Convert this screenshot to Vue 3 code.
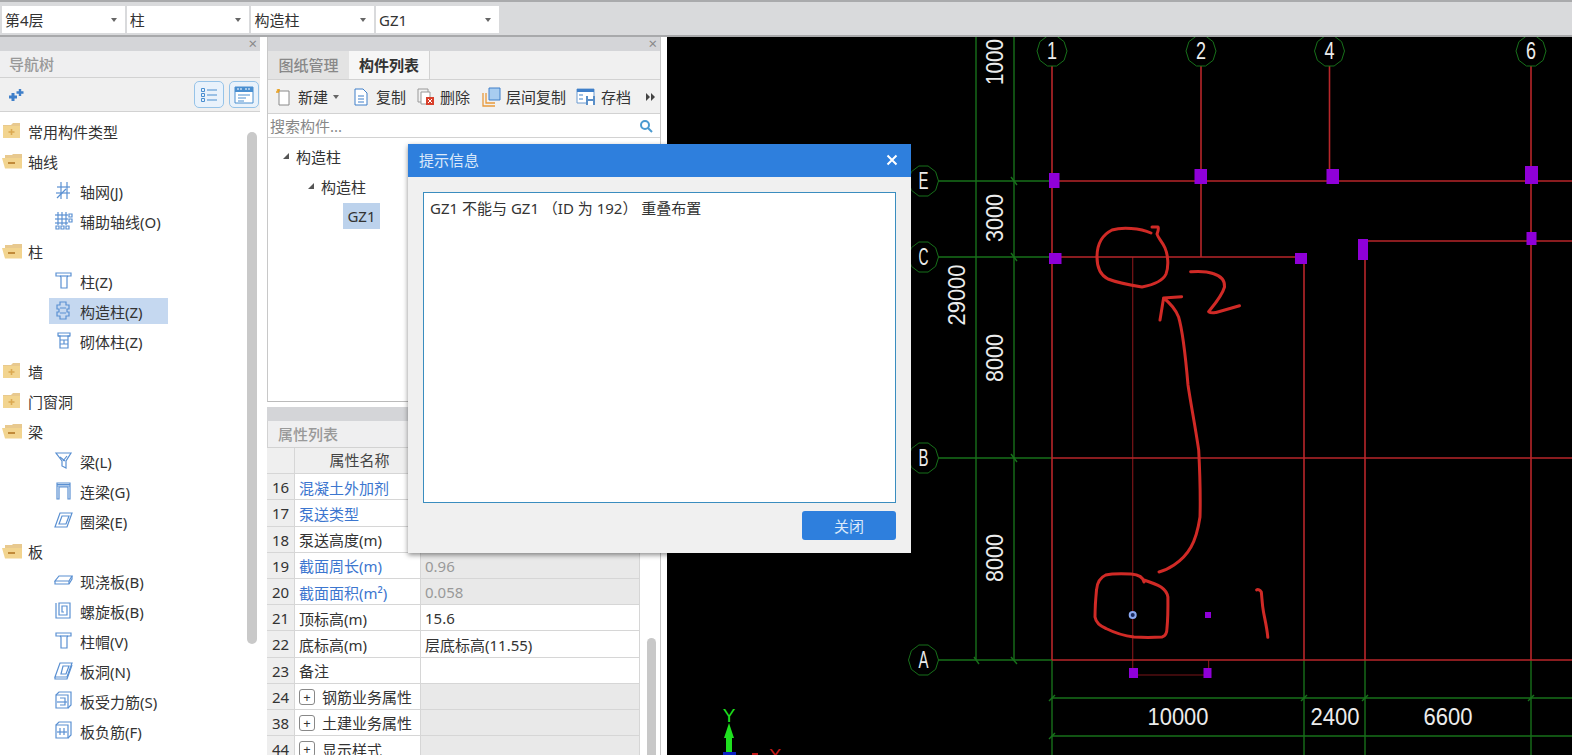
<script setup>
const selects = ['第4层', '柱', '构造柱', 'GZ1']

const treeRows = [
  { label: '常用构件类型', folder: 'closed' },
  { label: '轴线', folder: 'open' },
  { label: '轴网(J)', icon: 'grid' },
  { label: '辅助轴线(O)', icon: 'aux' },
  { label: '柱', folder: 'open' },
  { label: '柱(Z)', icon: 'column' },
  { label: '构造柱(Z)', icon: 'gz', active: true },
  { label: '砌体柱(Z)', icon: 'masonry' },
  { label: '墙', folder: 'closed' },
  { label: '门窗洞', folder: 'closed' },
  { label: '梁', folder: 'open' },
  { label: '梁(L)', icon: 'beam' },
  { label: '连梁(G)', icon: 'link' },
  { label: '圈梁(E)', icon: 'ring' },
  { label: '板', folder: 'open' },
  { label: '现浇板(B)', icon: 'slab' },
  { label: '螺旋板(B)', icon: 'spiral' },
  { label: '柱帽(V)', icon: 'column' },
  { label: '板洞(N)', icon: 'hole' },
  { label: '板受力筋(S)', icon: 'rebarS' },
  { label: '板负筋(F)', icon: 'rebarF' },
]

const icons = {
  grid: ['M3 6H16', 'M2 12H16', 'M7 1V18', 'M13 1V18', 'M3 17L12 8'],
  aux: ['M1 4H14', 'M1 8H14', 'M1 12H14', 'M4 1V14', 'M8 1V14', 'M12 1V14', 'M15 3h3v3h-3z', 'M15 8h3v3h-3z', 'M2 15h3v3H2z', 'M7 15h3v3H7z', 'M12 15h3v3h-3z'],
  column: ['M2 2H17V5H14L13 6V17H7V6L6 5H2Z', 'M6 5H14'],
  gz: ['M6 1H12V4H15V8H13V11H15V15H12V18H6V15H3V11H5V8H3V4H6Z', 'M6 7H12M6 12H12'],
  masonry: ['M4 2H16V5H14V17H6V5H4Z', 'M4 5H16', 'M6 9H14M6 13H14', 'M10 9V13'],
  beam: ['M2 2H17L12 10V17L8 15V10Z', 'M6 6L11 10M13 5L9 10'],
  link: ['M3 2H16V18H14V6H5V18H3Z', 'M3 3.5H16M3 5H16'],
  ring: ['M6 2H18L13 16H1Z', 'M8 5H15L12 13H5Z'],
  slab: ['M5 5H18L15 10H1Z', 'M1 10V13H15L18 8V5', 'M15 10V13'],
  spiral: ['M2 2V17H16V2H5V14H13V5H8V11H10'],
  hole: ['M6 2H18L13 16H1Z', 'M9 5H15L12 13H7Z', 'M1 16V18H13L18 4'],
  rebarS: ['M2 4H14V17H2Z', 'M2 4L5 1H17V14L14 17', 'M3 11H13', 'M6 7H11V14H6'],
  rebarF: ['M2 4H14V17H2Z', 'M2 4L5 1H17V14L14 17', 'M3 11H13', 'M6 7V14M10 7V14'],
}

const propRows = [
  { no: 16, name: '混凝土外加剂', blue: true, value: '' },
  { no: 17, name: '泵送类型', blue: true, value: '' },
  { no: 18, name: '泵送高度(m)', value: '' },
  { no: 19, name: '截面周长(m)', blue: true, value: '0.96', grey: true },
  { no: 20, name: '截面面积(m²)', blue: true, value: '0.058', grey: true },
  { no: 21, name: '顶标高(m)', value: '15.6' },
  { no: 22, name: '底标高(m)', value: '层底标高(11.55)' },
  { no: 23, name: '备注', value: '' },
  { no: 24, name: '钢筋业务属性', value: '', grey: true, group: true },
  { no: 38, name: '土建业务属性', value: '', grey: true, group: true },
  { no: 44, name: '显示样式', value: '', grey: true, group: true },
]

// drawing coordinates are page pixels, the svg viewBox starts at the canvas corner
const greenLines = [
  [976, 37, 976, 660], [1014, 37, 1014, 660],
  [938, 181, 1052, 181], [938, 257, 1052, 257], [938, 458, 1052, 458], [938, 660, 1052, 660],
  [1052, 660, 1052, 755], [1304, 660, 1304, 755], [1365, 660, 1365, 755], [1531, 660, 1531, 755],
  [1052, 698, 1572, 698], [1052, 736, 1572, 736],
]
const ticks = [
  [1011, 177, 1017, 185], [1011, 253, 1017, 261], [1011, 454, 1017, 462],
  [974, 657, 979, 664], [1011, 657, 1017, 664],
  [1049, 701, 1055, 695], [1301, 701, 1307, 695], [1362, 701, 1368, 695], [1528, 701, 1534, 695],
  [1049, 739, 1055, 733],
]
const redLines = [
  [1052, 66, 1052, 660], [1201, 66, 1201, 257], [1329.5, 66, 1329.5, 181], [1531, 66, 1531, 660],
  [1304, 257, 1304, 660], [1365, 241, 1365, 660],
  [1052, 181, 1572, 181], [1052, 257, 1304, 257], [1365, 241, 1572, 241],
  [1052, 458, 1572, 458], [1052, 660, 1572, 660],
]
const darkLines = [
  [1132.7, 257, 1132.7, 670], [1208.6, 660, 1208.6, 670], [1134, 675, 1208, 675],
]
const blocks = [
  [1049, 173, 10.5, 15], [1194.5, 169, 12.5, 15], [1326.5, 169, 12.5, 15], [1525, 166, 13, 18],
  [1049, 253, 12.5, 11], [1295, 253, 12, 11], [1358, 239, 10, 21], [1526.5, 232, 10, 13],
  [1129, 668, 9, 10], [1203.5, 668, 8, 10], [1205, 612, 6, 6],
]

const bubblePoints = (cx, cy, r) => {
  const pts = []
  for (let i = 0; i < 10; i++) {
    const a = (Math.PI * 2 * i) / 10
    pts.push(`${(cx + r * Math.cos(a)).toFixed(1)},${(cy + r * 1.05 * Math.sin(a)).toFixed(1)}`)
  }
  return pts.join(' ')
}
const bubbles = [
  { x: 1052, y: 51, t: '1' }, { x: 1201, y: 51, t: '2' }, { x: 1329.5, y: 51, t: '4' }, { x: 1531, y: 51, t: '6' },
  { x: 923.5, y: 181, t: 'E' }, { x: 923.5, y: 257, t: 'C' }, { x: 923.5, y: 458, t: 'B' }, { x: 923.5, y: 660, t: 'A' },
]
const dimsV = [
  { x: 995, y: 62, t: '1000', w: 46 }, { x: 995, y: 218, t: '3000', w: 48 },
  { x: 995, y: 358, t: '8000', w: 48 }, { x: 995, y: 558, t: '8000', w: 48 },
  { x: 957, y: 295, t: '29000', w: 61 },
]
const dimsH = [
  { x: 1178, y: 717, t: '10000', w: 61 }, { x: 1335, y: 717, t: '2400', w: 49 }, { x: 1448, y: 717, t: '6600', w: 49 },
]
const marks = [
  'M1151 233C1140 228 1122 227 1112 230C1102 235 1097 245 1097 257C1097 268 1100 275 1108 279C1118 283 1130 285 1142 287C1152 285 1163 281 1166 274C1169 266 1168 255 1165 248C1162 241 1158 238 1157 234C1158 231 1159 229 1158 227L1152 227',
  'M1181.6 296.7L1163.6 298L1160 320M1163.6 298C1170 303 1175 308 1178.6 317C1183 332 1185 350 1188 385C1191 405 1195 425 1198.7 450C1200 475 1200.5 500 1200 517C1198 530 1195 540 1191 547C1186 556 1180 561 1174 565C1168 569 1163 571 1159 572',
  'M1190.6 271.7C1200 271 1209 272 1213 273.5C1221 276 1225 281 1224.5 287C1222 296 1214 305 1208.6 311.7C1211 313.5 1213 313 1216 312.5L1239.5 305.7',
  'M1144 582C1143 576 1137 574.5 1131 574C1120 573.5 1110 574 1105.7 575C1099 578 1097 583 1096.5 590C1095.5 600 1095 608 1095 617C1096 623 1100 626 1106 628.5C1115 633 1125 636 1134 637C1143 637.5 1153 637.5 1162 637C1166 636 1167 632 1167 628C1168 618 1168 606 1167.9 597C1167 592 1164 589 1161 587C1156 584 1150 582 1144 580',
  'M1256.6 590C1258 589 1260 590 1261.3 592C1262 598 1262 604 1263.5 612C1265 620 1267 628 1267.8 637.3',
]
</script>

<template>
  <div class="page">
    <div class="top-bar">
      <div v-for="s in selects" :key="s" class="select">
        <span>{{ s }}</span>
        <i class="caret"></i>
      </div>
    </div>

    <div class="main">
      <aside class="nav-panel">
        <div class="strip"><span class="strip-x">×</span></div>
        <div class="panel-title">导航树</div>
        <div class="nav-tools">
          <svg class="spark" width="17" height="14" viewBox="0 0 17 14">
            <path d="M5 5V13M1 9H9" stroke="#3f7fc9" stroke-width="3" />
            <path d="M12 1V8M8.5 4.5H15.5" stroke="#3f7fc9" stroke-width="2.4" />
          </svg>
          <span class="tool-spacer"></span>
          <button class="view-btn">
            <svg width="18" height="18" viewBox="0 0 18 18" fill="none" stroke="#4a8fd0">
              <path d="M1.5 2.5h3v3h-3zM1.5 7.5h3v3h-3zM1.5 12.5h3v3h-3zM7 4H17M7 9H17M7 14H17" />
            </svg>
          </button>
          <button class="view-btn">
            <svg width="20" height="18" viewBox="0 0 20 18">
              <path d="M1 1H19V17H1Z" fill="#fff" stroke="#4a8fd0" />
              <path d="M1 1H19V6H1Z" fill="#4a8fd0" />
              <path d="M4 9H16M4 12H12M4 15H10" stroke="#4a8fd0" />
              <path d="M3 3H8M11 3H17" stroke="#fff" stroke-dasharray="2 1" />
            </svg>
          </button>
        </div>
        <div class="tree">
          <div v-for="row in treeRows" :key="row.label" class="tree-row" :class="{ child: row.icon, active: row.active }">
            <svg v-if="row.folder" class="folder" width="20" height="18" viewBox="0 0 20 18">
              <template v-if="row.folder === 'closed'">
                <path d="M1 5V3H9L11 1H18V5Z" fill="#e8c98f" />
                <path d="M1 4H18V16H1Z" fill="#f2d48f" />
                <path d="M6.5 10H12.5M9.5 7V13" stroke="#dba850" stroke-width="1.6" />
              </template>
              <template v-else>
                <path d="M3 4V3H10L11 2H20V16H3Z" fill="#e8c98f" />
                <path d="M0 6H20L20 16.5H3Z" fill="#f2d48f" />
                <path d="M6 11H13" stroke="#c08a3a" stroke-width="2" />
              </template>
            </svg>
            <svg v-else class="item-icon" width="20" height="20" viewBox="0 0 20 20" fill="none" stroke="#5a90d2" stroke-width="1.2">
              <path v-for="d in icons[row.icon]" :key="d" :d="d" />
            </svg>
            <span>{{ row.label }}</span>
          </div>
          <div class="nav-scroll"></div>
        </div>
      </aside>

      <section class="mid">
        <div class="comp-panel">
          <div class="strip"><span class="strip-x">×</span></div>
          <div class="tabs">
            <span class="tab">图纸管理</span>
            <span class="tab on">构件列表</span>
          </div>
          <div class="comp-tools">
            <span class="tool t-new">
              <svg width="18" height="18" viewBox="0 0 18 18" fill="none">
                <path d="M4 3H14V17H4Z" fill="#fff" stroke="#8a8a8a" />
                <path d="M4 3V1M1 4H4M2 1.5L4 3.5" stroke="#e8a020" stroke-width="1.6" />
              </svg>
              新建
            </span>
            <i class="caret small"></i>
            <span class="tool t-copy">
              <svg width="16" height="18" viewBox="0 0 16 18" fill="#fff" stroke="#3f7fc9">
                <path d="M2 1H10L14 5V17H2Z" />
                <path d="M5 8H11M5 11H11M5 14H11" />
              </svg>
              复制
            </span>
            <span class="tool t-del">
              <svg width="18" height="18" viewBox="0 0 18 18" fill="none">
                <path d="M1 1H11V14H1Z" stroke="#999" />
                <path d="M4 4H13V16H4Z" fill="#fff" stroke="#999" />
                <path d="M9 9H17V17H9Z" fill="#d8402c" />
                <path d="M11 11L15 15M15 11L11 15" stroke="#fff" />
              </svg>
              删除
            </span>
            <span class="tool t-floor">
              <svg width="19" height="20" viewBox="0 0 19 20" fill="none">
                <path d="M1 6V19H13M4 6V16H13" stroke="#e89a3c" stroke-width="1.3" />
                <path d="M7 1H18V13H7Z" fill="#a8cdf0" stroke="#3f7fc9" />
              </svg>
              层间复制
            </span>
            <span class="tool t-save">
              <svg width="20" height="18" viewBox="0 0 20 18" fill="#fff">
                <path d="M1 1H18V15H1Z" stroke="#6a9ad0" />
                <path d="M1 1H18V4H1Z" fill="#3f7fc9" />
                <path d="M3 6h4v2H3zM3 10h4v2H3z" fill="#9fc0e4" />
                <path d="M10 8H19V17H10Z" fill="#5a8fc8" />
                <path d="M12 8H17V11H12ZM12 13H17V17H12Z" fill="#fff" />
              </svg>
              存档
            </span>
            <svg class="more" width="9" height="8" viewBox="0 0 9 8" fill="#444">
              <path d="M0 0L4 4L0 8ZM5 0L9 4L5 8Z" />
            </svg>
          </div>
          <div class="search">
            <span>搜索构件...</span>
            <svg width="14" height="14" viewBox="0 0 14 14" fill="none" stroke="#4a9ad0" stroke-width="2">
              <circle cx="6" cy="6" r="4" />
              <path d="M9 9L13 13" />
            </svg>
          </div>
          <div class="comp-tree">
            <div class="comp-row"><i class="tri"></i>构造柱</div>
            <div class="comp-row lv2"><i class="tri"></i>构造柱</div>
            <div class="comp-row lv3"><span class="leaf">GZ1</span></div>
          </div>
        </div>

        <div class="prop-panel">
          <div class="strip short"></div>
          <div class="panel-title prop-title">属性列表</div>
          <div class="prop-body">
            <div class="prop-table">
              <div class="cell head"></div>
              <div class="cell head name-head">属性名称</div>
              <div class="cell head"></div>
              <template v-for="r in propRows" :key="r.no">
                <div class="cell no">{{ r.no }}</div>
                <div class="cell name" :class="{ blue: r.blue }">
                  <i v-if="r.group" class="plus">+</i>{{ r.name }}
                </div>
                <div class="cell value" :class="{ grey: r.grey, muted: r.grey && r.value }">{{ r.value }}</div>
              </template>
            </div>
            <div class="prop-side"><div class="prop-scroll"></div></div>
          </div>
        </div>
      </section>

      <div class="canvas">
        <svg width="905" height="718" viewBox="667 37 905 718">
          <line v-for="(l, i) in greenLines" :key="'g' + i" :x1="l[0]" :y1="l[1]" :x2="l[2]" :y2="l[3]" stroke="#17701a" stroke-width="1.4" />
          <line v-for="(l, i) in ticks" :key="'t' + i" :x1="l[0]" :y1="l[1]" :x2="l[2]" :y2="l[3]" stroke="#17701a" stroke-width="1.4" />
          <line v-for="(l, i) in darkLines" :key="'d' + i" :x1="l[0]" :y1="l[1]" :x2="l[2]" :y2="l[3]" stroke="#7a1518" stroke-width="1.2" />
          <line v-for="(l, i) in redLines" :key="'r' + i" :x1="l[0]" :y1="l[1]" :x2="l[2]" :y2="l[3]" stroke="#b8262a" stroke-width="1.6" />
          <rect v-for="(b, i) in blocks" :key="'b' + i" :x="b[0]" :y="b[1]" :width="b[2]" :height="b[3]" fill="#8f00d8" />
          <circle cx="1132.7" cy="615" r="3" fill="#1a2a60" stroke="#8aa8f0" stroke-width="2" />

          <g v-for="b in bubbles" :key="b.t">
            <polygon :points="bubblePoints(b.x, b.y, 15)" fill="#000" stroke="#17701a" />
            <text :x="b.x" :y="b.y + 8" class="cad" text-anchor="middle" font-size="23" textLength="10" lengthAdjust="spacingAndGlyphs">{{ b.t }}</text>
          </g>
          <text v-for="d in dimsV" :key="d.t + d.y" class="cad" font-size="24" text-anchor="middle" :textLength="d.w" lengthAdjust="spacingAndGlyphs"
            :transform="`translate(${d.x + 8} ${d.y}) rotate(-90)`">{{ d.t }}</text>
          <text v-for="d in dimsH" :key="d.t" class="cad" font-size="24" text-anchor="middle" :textLength="d.w" lengthAdjust="spacingAndGlyphs"
            :x="d.x" :y="d.y + 8">{{ d.t }}</text>

          <path v-for="(d, i) in marks" :key="'m' + i" :d="d" fill="none" stroke="#d02a26" stroke-width="3" stroke-linecap="round" stroke-linejoin="round" />

          <text x="729" y="722" class="axis-y" text-anchor="middle" font-size="19">Y</text>
          <path d="M729 723L734 738H732V752H726V738H724Z" fill="#1fe01f" />
          <rect x="723" y="752" width="13" height="3" fill="#0a20c0" />
          <text x="775" y="762" fill="#c01818" text-anchor="middle" font-size="19" class="axis-x">X</text>
          <rect x="752" y="753" width="6" height="2" fill="#c01818" />
        </svg>
      </div>
    </div>

    <div class="dialog">
      <div class="dialog-head">
        <span>提示信息</span>
        <svg width="12" height="12" viewBox="0 0 12 12" stroke="#fff" stroke-width="2">
          <path d="M1.5 1.5L10.5 10.5M10.5 1.5L1.5 10.5" />
        </svg>
      </div>
      <div class="dialog-body">
        <div class="message">GZ1 不能与 GZ1 （ID 为 192） 重叠布置</div>
        <div class="dialog-foot">
          <button class="close-btn">关闭</button>
        </div>
      </div>
    </div>
  </div>
</template>

<style>
html, body {
  margin: 0;
  overflow: hidden;
}
</style>

<style scoped>
.page {
  position: relative;
  width: 1572px;
  height: 755px;
  overflow: hidden;
  display: flex;
  flex-direction: column;
  background: #fff;
  color: #333;
  font-family: "Noto Sans", "Noto Sans CJK SC", sans-serif;
  font-size: 15px;
}

.top-bar {
  height: 37px;
  box-sizing: border-box;
  flex-shrink: 0;
  display: flex;
  gap: 2px;
  padding: 4px 0 3px 2px;
  background: #d9dadc;
  border-top: 2px solid #a9aaac;
  border-bottom: 2px solid #a8a9ab;
}

.select {
  width: 122.7px;
  height: 27px;
  box-sizing: border-box;
  display: flex;
  align-items: center;
  justify-content: space-between;
  padding: 0 8px 0 3px;
  background: #fff;
}

.caret {
  width: 0;
  height: 0;
  border-left: 3.5px solid transparent;
  border-right: 3.5px solid transparent;
  border-top: 4px solid #666;
}

.main {
  flex: 1;
  min-height: 0;
  display: flex;
}

.nav-panel {
  width: 267px;
  flex-shrink: 0;
  display: flex;
  flex-direction: column;
  box-sizing: border-box;
  padding-right: 7px;
}

.strip {
  height: 14px;
  flex-shrink: 0;
  position: relative;
  background: #d4d5d8;
}

.strip-x {
  position: absolute;
  right: 3px;
  top: -3px;
  color: #888;
  font-size: 15px;
  line-height: 18px;
}

.panel-title {
  height: 27px;
  flex-shrink: 0;
  box-sizing: border-box;
  display: flex;
  align-items: center;
  padding: 0 0 2px 9px;
  background: #efeff0;
  border-bottom: 1px solid #d2d2d2;
  color: #999;
  font-weight: 500;
}

.nav-tools {
  height: 34px;
  flex-shrink: 0;
  box-sizing: border-box;
  display: flex;
  align-items: center;
  gap: 5px;
  padding: 0 1px 0 8px;
  background: #f0f0f0;
  border-bottom: 1px solid #d2d2d2;
}

.tool-spacer {
  flex: 1;
}

.view-btn {
  width: 30px;
  height: 27px;
  padding: 0;
  display: flex;
  align-items: center;
  justify-content: center;
  background: #e9f2fb;
  border: 1px solid #96c3e8;
  border-radius: 5px;
}

.tree {
  position: relative;
  flex: 1;
  padding-top: 4px;
  overflow: hidden;
}

.tree-row {
  height: 30px;
  display: flex;
  align-items: center;
  gap: 6px;
  padding-left: 2px;
  white-space: nowrap;
}

.tree-row.child {
  padding-left: 54px;
  gap: 6px;
}

.tree-row.active {
  position: relative;
}

.tree-row.active::before {
  content: '';
  position: absolute;
  left: 49px;
  top: 2px;
  width: 119px;
  height: 26px;
  background: #c5d8f0;
}

.tree-row > * {
  position: relative;
}

.item-icon {
  flex-shrink: 0;
}

.folder {
  flex-shrink: 0;
}

.nav-scroll {
  position: absolute;
  left: 247px;
  top: 20px;
  width: 10px;
  height: 512px;
  border-radius: 5px;
  background: #c9c9c9;
}

.mid {
  width: 400px;
  flex-shrink: 0;
  padding-right: 6px;
  display: flex;
  flex-direction: column;
  box-sizing: border-box;
}

.comp-panel {
  height: 365px;
  flex-shrink: 0;
  display: flex;
  flex-direction: column;
  box-sizing: border-box;
  border-left: 1px solid #c8c8c8;
  border-right: 1px solid #c8c8c8;
  border-bottom: 1px solid #bbb;
}

.tabs {
  height: 28px;
  flex-shrink: 0;
  display: flex;
  background: #f0f0f0;
  border-bottom: 1px solid #d2d2d2;
}

.tab {
  width: 81px;
  display: flex;
  align-items: center;
  justify-content: center;
  padding-bottom: 1px;
  box-sizing: border-box;
  background: #e3e3e3;
  color: #888;
  font-weight: 500;
}

.tab.on {
  background: #f6f6f6;
  color: #333;
  font-weight: 700;
  border-right: 1px solid #d2d2d2;
}

.comp-tools {
  height: 34px;
  flex-shrink: 0;
  box-sizing: border-box;
  display: flex;
  align-items: center;
  padding-left: 7px;
  background: #f1f1f1;
  border-bottom: 1px solid #d2d2d2;
}

.tool {
  display: flex;
  align-items: center;
  gap: 5px;
  white-space: nowrap;
}

.caret.small {
  margin: 0 14px 0 5px;
}

.t-copy {
  gap: 7px;
}

.t-del {
  margin-left: 11px;
}

.t-floor {
  margin-left: 12px;
}

.t-save {
  margin-left: 10px;
}

.more {
  margin-left: auto;
  margin-right: 5px;
}

.search {
  height: 24px;
  flex-shrink: 0;
  box-sizing: border-box;
  display: flex;
  align-items: center;
  justify-content: space-between;
  padding: 0 7px 0 2px;
  color: #888;
  border-bottom: 1px solid #d2d2d2;
}

.comp-tree {
  padding-top: 3px;
}

.comp-row {
  height: 30px;
  display: flex;
  align-items: center;
  padding-left: 15px;
}

.comp-row.lv2 {
  padding-left: 40px;
}

.comp-row.lv3 {
  padding-left: 75px;
}

.tri {
  width: 0;
  height: 0;
  margin-right: 7px;
  border-left: 6px solid transparent;
  border-bottom: 6px solid #555;
}

.leaf {
  width: 37px;
  height: 26px;
  display: flex;
  align-items: center;
  justify-content: center;
  background: #bcd2ec;
}

.prop-panel {
  flex: 1;
  min-height: 0;
  margin-top: 5px;
  display: flex;
  flex-direction: column;
}

.prop-title {
  padding-left: 10px;
  border-left: 1px solid #d2d2d2;
}

.prop-body {
  flex: 1;
  min-height: 0;
  display: flex;
  overflow: hidden;
}

.prop-table {
  width: 373px;
  flex-shrink: 0;
  align-self: flex-start;
  display: grid;
  grid-template-columns: 28px 126px 219px;
  grid-auto-rows: 26.2px;
}

.cell {
  box-sizing: border-box;
  display: flex;
  align-items: center;
  padding-top: 1px;
  white-space: nowrap;
  border-bottom: 1px solid #d6d6d6;
  border-right: 1px solid #d6d6d6;
}

.head {
  background: #efefef;
}

.name-head {
  justify-content: center;
  padding: 0 0 2px 4px;
  color: #444;
}

.no {
  justify-content: center;
  background: #eee;
}

.name {
  padding-left: 4px;
  background: #fff;
}

.name.blue {
  color: #3c76cf;
}

.value {
  padding-left: 4px;
  background: #fff;
}

.value.grey {
  background: #e9e9e9;
}

.value.muted {
  color: #999;
}

.plus {
  width: 14px;
  height: 14px;
  margin: 0 7px 0 0;
  display: flex;
  align-items: center;
  justify-content: center;
  border: 1px solid #888;
  border-radius: 3px;
  background: #fff;
  font-style: normal;
  font-size: 13px;
  line-height: 14px;
}

.prop-side {
  position: relative;
  width: 21px;
  flex-shrink: 0;
  height: 100%;
  box-sizing: border-box;
  border-right: 1px solid #c8c8c8;
}

.prop-scroll {
  position: absolute;
  left: 7px;
  top: 190px;
  bottom: -10px;
  width: 9px;
  border-radius: 5px;
  background: #c8c8c8;
}

.canvas {
  flex: 1;
  min-width: 0;
  background: #000;
  overflow: hidden;
}

.canvas svg {
  display: block;
}

.cad {
  fill: #ececec;
  font-family: "Liberation Sans", sans-serif;
}

.axis-y {
  fill: #1fe01f;
  font-family: "Liberation Sans", sans-serif;
}

.axis-x {
  font-family: "Liberation Sans", sans-serif;
}

.dialog {
  position: absolute;
  left: 408px;
  top: 144px;
  width: 503px;
  height: 409px;
  display: flex;
  flex-direction: column;
  background: #f0f0f0;
  box-shadow: 0 2px 5px rgba(0, 0, 0, 0.45);
}

.dialog-head {
  height: 33px;
  flex-shrink: 0;
  box-sizing: border-box;
  display: flex;
  align-items: center;
  justify-content: space-between;
  padding: 0 13px 2px 11px;
  background: #2e7fdd;
  color: #dbe9fa;
}

.dialog-body {
  flex: 1;
  display: flex;
  flex-direction: column;
  padding: 15px 15px 13px 15px;
}

.message {
  height: 311px;
  box-sizing: border-box;
  padding: 5px 6px;
  line-height: 20px;
  background: #fff;
  border: 1.5px solid #3a8dbf;
  white-space: nowrap;
}

.dialog-foot {
  display: flex;
  justify-content: flex-end;
  padding-top: 8px;
}

.close-btn {
  width: 94px;
  height: 29px;
  padding: 0;
  border: none;
  border-radius: 3px;
  background: #2e7fdd;
  color: #dbe9fa;
  font-family: inherit;
  font-size: 15px;
}
</style>
